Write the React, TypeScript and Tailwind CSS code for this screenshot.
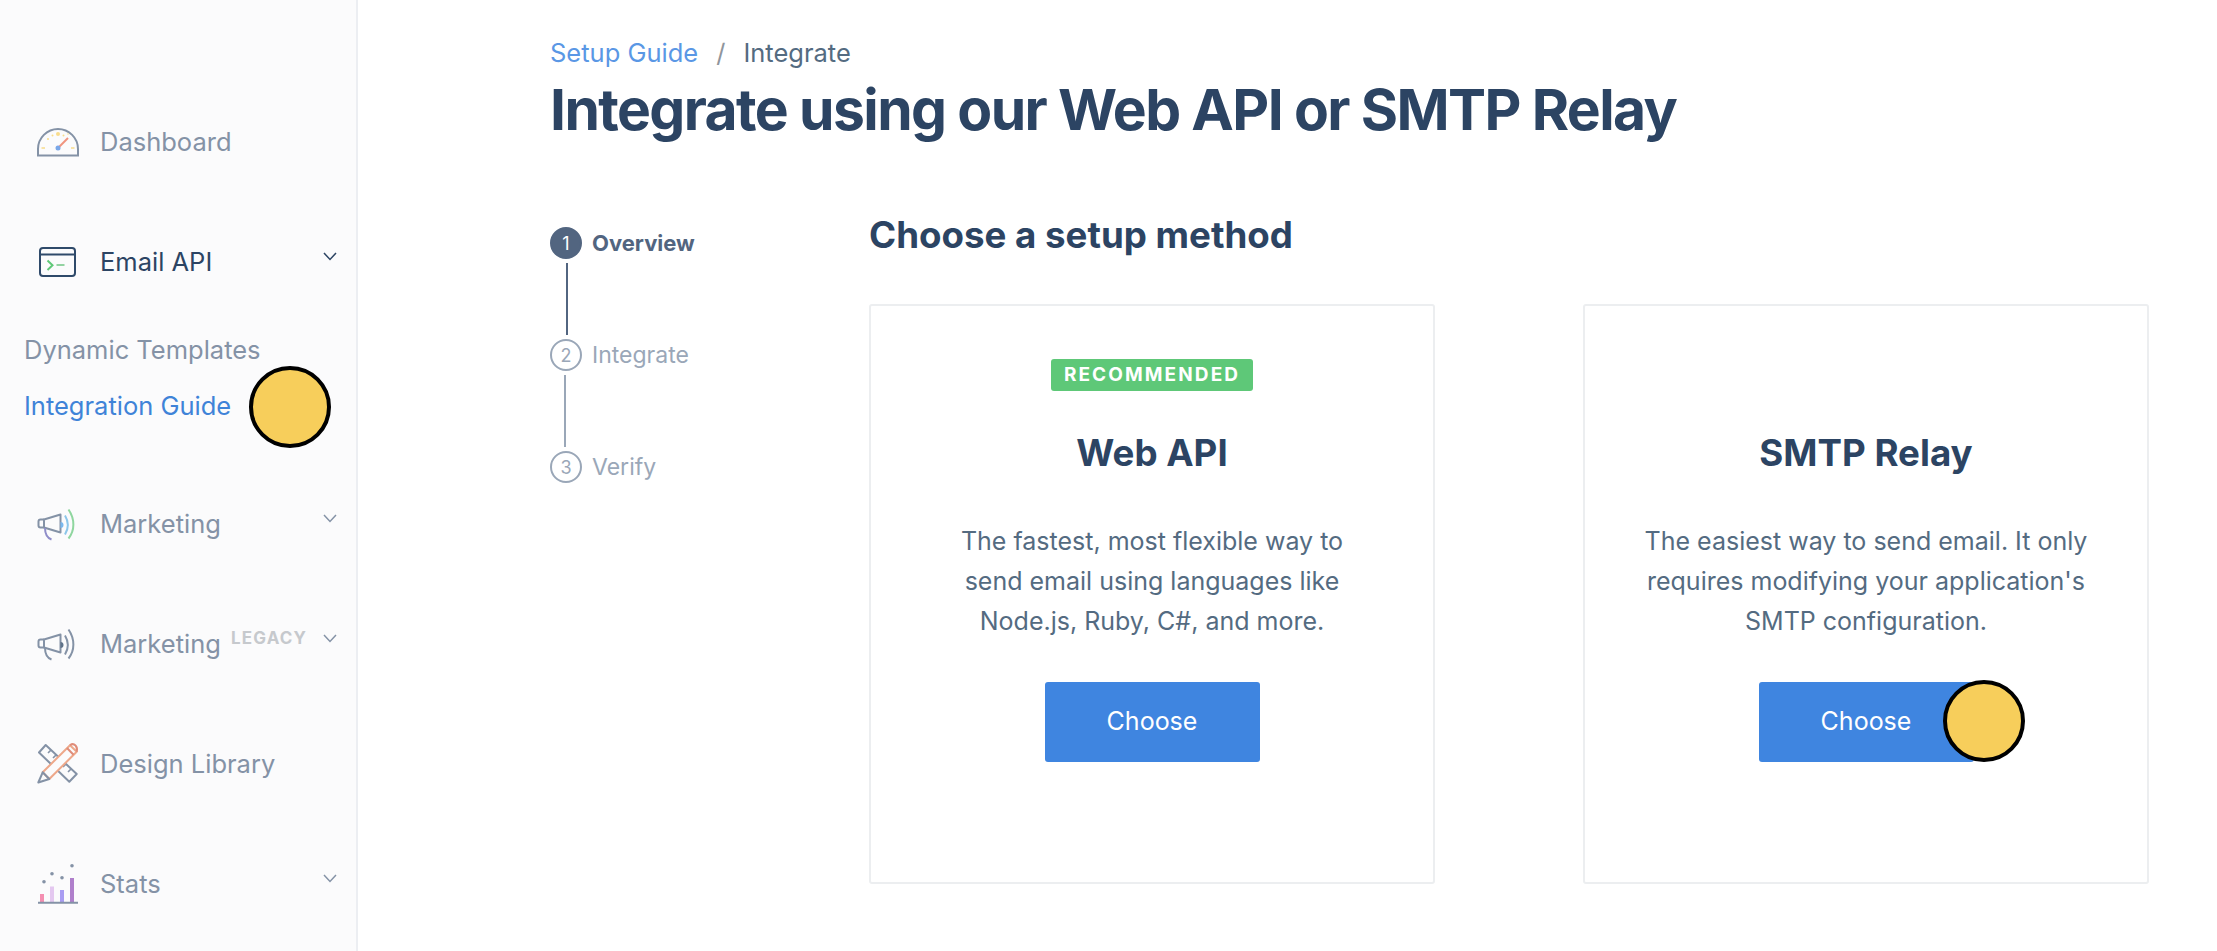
import type { ReactNode } from "react";

const grey = "#8492a6";

function Icon({ children }: { children: ReactNode }) {
  return (
    <svg width="44" height="44" viewBox="0 -2 44 44" fill="none" className="shrink-0 mr-[20px]">
      {children}
    </svg>
  );
}

function Chevron({ color = "#8492a6" }: { color?: string }) {
  return (
    <svg width="14" height="9" viewBox="0 0 14 9" fill="none" className="ml-auto mb-2 shrink-0">
      <path d="M1 1l6 6.5L13 1" stroke={color} strokeWidth="1.5" />
    </svg>
  );
}

function GaugeIcon() {
  return (
    <Icon>
      <path d="M2 35.5V29a20 20 0 0 1 40 0v6.5z" stroke={grey} strokeWidth="2" />
      <path d="M22.5 27.5L32 18" stroke="#f0947f" strokeWidth="2" />
      <circle cx="22" cy="28" r="2.5" fill="#7aa7e8" />
      <circle cx="22" cy="14" r="2" fill="#f8dc8c" />
      <circle cx="16.5" cy="15.5" r="1" fill="#f8dc8c" />
      <circle cx="27.5" cy="15.5" r="1" fill="#f8dc8c" />
      <circle cx="12" cy="19" r="1" fill="#f8dc8c" />
      <circle cx="32" cy="14" r="0.8" fill="#f8dc8c" />
      <path d="M5.5 28H9M35 28h3.5" stroke="#f8dc8c" strokeWidth="1.6" />
    </Icon>
  );
}

function TerminalIcon() {
  return (
    <Icon>
      <rect x="4" y="8" width="35" height="28" rx="3" stroke="#2f4a6a" strokeWidth="2" />
      <path d="M4 14.5h35" stroke="#2f4a6a" strokeWidth="2" />
      <path d="M11.5 20.5l5 4.7-5 4.7" stroke="#5fc878" strokeWidth="2" />
      <path d="M20.5 25h8" stroke="#93d3a2" strokeWidth="2" />
    </Icon>
  );
}

function MegaphoneIcon({ legacy }: { legacy?: boolean }) {
  const wave1 = legacy ? grey : "#8cc6ea";
  const wave2 = legacy ? grey : "#8fd69f";
  const dot = legacy ? "#5f7289" : "#7ab8ee";
  const handle = legacy ? grey : "#8f8dc9";
  return (
    <Icon>
      <path d="M24.5 12.5L8 17.5v8l16.5 5z" stroke={grey} strokeWidth="2" strokeLinejoin="round" />
      <path d="M8 17.5H4.5a2 2 0 0 0-2 2V23.5a2 2 0 0 0 2 2H8" stroke={grey} strokeWidth="2" />
      <path d="M9 26c0 6 2.5 10 6.5 11.5" stroke={handle} strokeWidth="2" />
      <path d="M24.5 20a3 3 0 0 1 0 6z" fill={dot} />
      <path d="M29 13.5c3.6 6 3.6 13 0 19" stroke={wave1} strokeWidth="2" />
      <path d="M32.5 7.5c6.5 9.5 6.5 21 0 29" stroke={wave2} strokeWidth="2" />
    </Icon>
  );
}

function DesignIcon() {
  return (
    <Icon>
      <path d="M3 10.5L9.7 3l31 29-7.4 7.7z" stroke={grey} strokeWidth="2" strokeLinejoin="round" />
      <path d="M12 11l3-3M17 16l3-3M27 25l3-3M32 30l3-3" stroke={grey} strokeWidth="1.6" />
      <path d="M6.7 30.3L34 3.2l6.7 6.6L13.3 37z" fill="#fbfbfc" stroke="#eea88a" strokeWidth="2" strokeLinejoin="round" />
      <path d="M31 6l6.5 6.8M34 3.2c2-1.5 4-1.2 5.5.3s1.8 3.9 1.2 6.3" stroke="#df8c79" strokeWidth="2" />
      <path d="M6.7 30.3L2.3 40.5 13.3 37z" stroke={grey} strokeWidth="2" strokeLinejoin="round" />
    </Icon>
  );
}

function StatsIcon() {
  return (
    <Icon>
      <rect x="4" y="32" width="4" height="8" fill="#f48fb1" />
      <rect x="14" y="24.5" width="4" height="15.5" fill="#e4c8f0" />
      <rect x="24" y="28" width="4" height="12" fill="#a99cf2" />
      <rect x="34" y="16" width="4" height="24" fill="#af7fcb" />
      <path d="M2 40.8h40" stroke={grey} strokeWidth="2" />
      <circle cx="8" cy="19.7" r="1.8" fill={grey} />
      <circle cx="16" cy="11.7" r="1.8" fill={grey} />
      <circle cx="26" cy="15.7" r="1.8" fill={grey} />
      <circle cx="36" cy="3.7" r="1.8" fill={grey} />
    </Icon>
  );
}

function NavRow({
  icon,
  label,
  active,
  chevron,
  legacy,
}: {
  icon: ReactNode;
  label: string;
  active?: boolean;
  chevron?: boolean;
  legacy?: boolean;
}) {
  return (
    <div className="flex items-center h-[120px] pl-[36px] pr-[19px]">
      {icon}
      <span className={`pt-[3px] text-[25.5px] leading-[30px] ${active ? "text-[#2c4463]" : "text-[#8492a6]"}`}>{label}</span>
      {legacy && (
        <span className="ml-[10px] mb-2 text-[17px] leading-[20px] font-bold tracking-[1.2px] text-[#c6c9cd]">LEGACY</span>
      )}
      {chevron && <Chevron color={active ? "#2c4463" : "#8492a6"} />}
    </div>
  );
}

function Sidebar() {
  return (
    <aside className="w-[358px] shrink-0 h-full bg-[#fbfbfc] border-r-2 border-[#eceef2] pt-[80px]">
      <NavRow icon={<GaugeIcon />} label="Dashboard" />
      <NavRow icon={<TerminalIcon />} label="Email API" active chevron />
      <div className="flex flex-col mb-[30px]">
        <div className="h-[56px] flex items-center pl-[24px] pt-[5px] text-[25.5px] text-[#8492a6]">Dynamic Templates</div>
        <div className="relative h-[56px] flex items-center pl-[24px] pt-[5px] text-[25.5px] text-[#3f83d8]">
          Integration Guide
          <Marker className="left-[249px] top-[-10px]" />
        </div>
      </div>
      <NavRow icon={<MegaphoneIcon />} label="Marketing" chevron />
      <NavRow icon={<MegaphoneIcon legacy />} label="Marketing" chevron legacy />
      <NavRow icon={<DesignIcon />} label="Design Library" />
      <NavRow icon={<StatsIcon />} label="Stats" chevron />
    </aside>
  );
}

// yellow click marker from the tutorial overlay
function Marker({ className }: { className: string }) {
  return <div className={`absolute w-[82px] h-[82px] rounded-full bg-[#f7ce5b] border-[4px] border-black ${className}`} />;
}

function Step({ n, label, active }: { n: number; label: string; active?: boolean }) {
  return (
    <div className="flex items-center h-[32px]">
      <div
        className={`w-[32px] h-[32px] rounded-full flex items-center justify-center text-[18px] border-2 ${
          active ? "bg-[#526580] border-[#526580] text-white" : "border-[#9aa7b8] text-[#9aa7b8]"
        }`}
      >
        {n}
      </div>
      <span className={`ml-[10px] ${active ? "text-[22px] font-bold text-[#526580]" : "text-[23px] text-[#9aa7b8]"}`}>{label}</span>
    </div>
  );
}

function Card({
  title,
  lines,
  recommended,
  marker,
}: {
  title: string;
  lines: string[];
  recommended?: boolean;
  marker?: boolean;
}) {
  return (
    <div className="w-[566px] h-[580px] bg-white border-2 border-[#eceef0] rounded-[3px] pt-[53px] flex flex-col items-center">
      <div className="h-[32px]">
        {recommended && (
          <span className="flex items-center h-[32px] w-[202px] justify-center rounded-[3px] bg-[#5ec878] text-white text-[19px] font-bold tracking-[2.1px]">
            RECOMMENDED
          </span>
        )}
      </div>
      <h3 className="mt-[40px] h-[44px] leading-[44px] text-[36.7px] font-bold text-[#2c4463]">{title}</h3>
      <p className="mt-[46px] text-[25px] leading-[40px] text-center text-[#546b81]">
        {lines.map((line) => (
          <span key={line} className="block">
            {line}
          </span>
        ))}
      </p>
      <div className="relative mt-[41px]">
        <button className="w-[215px] h-[80px] rounded-[3px] bg-[#3f85e0] text-white text-[25px]">Choose</button>
        {marker && <Marker className="left-[184px] top-[-2px]" />}
      </div>
    </div>
  );
}

export default function App() {
  return (
    <div className="flex w-full h-[951px] overflow-hidden bg-white font-['Inter',sans-serif]">
      <Sidebar />
      <main className="flex-1 pl-[192px] pt-[38px]">
        {/* Breadcrumb */}
        <div className="flex items-center h-[30px] text-[25.5px]">
          <span className="text-[#5a97e5]">Setup Guide</span>
          <span className="mx-[18px] text-[#8f959c]">/</span>
          <span className="text-[#546b81]">Integrate</span>
        </div>
        <h1 className="mt-[7px] h-[70px] leading-[70px] text-[57px] font-bold tracking-[-1.6px] text-[#2c4463] whitespace-nowrap">
          Integrate using our Web API or SMTP Relay
        </h1>

        <div className="flex mt-[68px]">
          {/* Stepper */}
          <div className="w-[319px] shrink-0 pt-[14px]">
            <Step n={1} label="Overview" active />
            <div className="w-[2px] h-[72px] my-1 ml-[16px] bg-[#526580]" />
            <Step n={2} label="Integrate" />
            <div className="w-[2px] h-[72px] my-1 ml-[14px] bg-[#9aa7b8]" />
            <Step n={3} label="Verify" />
          </div>

          <div>
            <h2 className="h-[44px] leading-[44px] text-[36.7px] font-bold text-[#2c4463]">Choose a setup method</h2>
            <div className="flex gap-[148px] mt-[47px]">
              <Card
                recommended
                title="Web API"
                lines={["The fastest, most flexible way to", "send email using languages like", "Node.js, Ruby, C#, and more."]}
              />
              <Card
                marker
                title="SMTP Relay"
                lines={["The easiest way to send email. It only", "requires modifying your application's", "SMTP configuration."]}
              />
            </div>
          </div>
        </div>
      </main>
    </div>
  );
}
